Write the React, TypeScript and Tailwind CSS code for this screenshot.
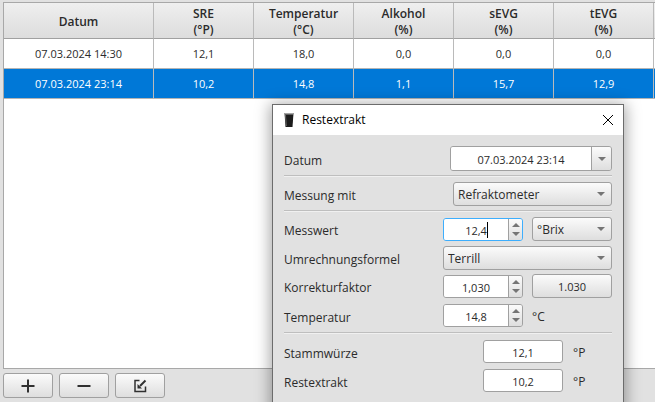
import React from 'react';
import { clsx } from 'clsx';

interface Measurement {
  date: string;
  values: string[];
}

const columns = [
  { name: 'SRE', unit: '(°P)' },
  { name: 'Temperatur', unit: '(°C)' },
  { name: 'Alkohol', unit: '(%)' },
  { name: 'sEVG', unit: '(%)' },
  { name: 'tEVG', unit: '(%)' },
];

const measurements: Measurement[] = [
  { date: '07.03.2024 14:30', values: ['12,1', '18,0', '0,0', '0,0', '0,0'] },
  { date: '07.03.2024 23:14', values: ['10,2', '14,8', '1,1', '15,7', '12,9'] },
];

const raised = 'bg-linear-to-b from-[#fbfbfb] to-[#dedede]';
const frame = 'border border-[#a0a0a0] rounded-[3px]';
const headCell = 'h-9 border-b border-b-[#a0a0a0] p-0 pt-0.5 leading-4 font-semibold';
const bodyCell = 'h-[30px] border-b border-b-[#b4b4b4] p-0 pt-0.5';
const divider = 'border-r border-r-[#bababa]';

const Caret: React.FC<{ up?: boolean }> = ({ up }) => (
  <svg width="8" height="4" viewBox="0 0 8 4" fill="#757575" aria-hidden="true">
    <path d={up ? 'M0 4 4 0 8 4z' : 'M0 0h8L4 4z'} />
  </svg>
);

const Label: React.FC<{ htmlFor: string; children: React.ReactNode }> = ({ htmlFor, children }) => (
  <label htmlFor={htmlFor} className="flex-1 self-center whitespace-nowrap pt-1">
    {children}
  </label>
);

const Separator = () => <hr className="h-0.5 border-0 border-t border-[#bebebe] bg-[#f0f0f0]" />;

interface SelectProps {
  id: string;
  value: string;
  className: string;
  label?: string;
}

const Select: React.FC<SelectProps> = ({ id, value, className, label }) => (
  <div className={clsx('relative h-6', className)}>
    <select
      id={id}
      aria-label={label}
      defaultValue={value}
      className={clsx('h-full w-full appearance-none pl-1 pr-5 pt-0.5 outline-none', raised, frame)}
    >
      <option>{value}</option>
    </select>
    <span className="pointer-events-none absolute inset-y-0 right-[7px] flex items-center">
      <Caret />
    </span>
  </div>
);

interface SpinnerProps {
  id: string;
  value: string;
  focused?: boolean;
}

const Spinner: React.FC<SpinnerProps> = ({ id, value, focused }) => (
  <div
    className={clsx(
      'relative flex h-[23px] w-20 overflow-hidden rounded-[3px] border',
      focused ? 'border-[#3daefd]' : 'border-[#a0a0a0]',
    )}
  >
    <input
      id={id}
      defaultValue={value}
      className="min-w-0 flex-1 bg-white pt-[3px] text-center text-[11px] caret-transparent outline-none"
    />
    {focused && <span className="absolute left-[43px] top-[3px] h-4 w-px bg-black" />}
    <div className={clsx('flex w-3.5 flex-col border-l border-[#a0a0a0] py-0.5', raised)}>
      <button aria-label="Erhöhen" className="flex flex-1 items-center justify-center">
        <Caret up />
      </button>
      <button aria-label="Verringern" className="flex flex-1 items-center justify-center">
        <Caret />
      </button>
    </div>
  </div>
);

const Result: React.FC<{ id: string; label: string; value: string }> = ({ id, label, value }) => (
  <div className="mt-1.5 flex h-[23px]">
    <Label htmlFor={id}>{label}</Label>
    <input
      id={id}
      readOnly
      defaultValue={value}
      className={clsx('w-20 bg-white pt-[3px] text-center text-[11px] outline-none', frame)}
    />
    <span className="w-[49px] self-center pl-2.5 pt-0.5">°P</span>
  </div>
);

const ToolButton: React.FC<{ label: string; children: React.ReactNode }> = ({ label, children }) => (
  <button
    aria-label={label}
    className={clsx('flex h-[25px] w-[50px] items-center justify-center', raised, frame)}
  >
    <svg width="16" height="16" viewBox="0 0 16 16" fill="none" stroke="#303030" aria-hidden="true">
      {children}
    </svg>
  </button>
);

const MeasurementTable = () => (
  <table className="w-full table-fixed border-separate border-spacing-0 text-center">
    <colgroup>
      <col className="w-[150px]" />
      {columns.map((c) => (
        <col key={c.name} className="w-[100px]" />
      ))}
      <col />
    </colgroup>
    <thead>
      <tr className="bg-linear-to-b from-[#efefef] to-[#dcdcdc]">
        <th className={clsx(headCell, divider)}>Datum</th>
        {columns.map((c) => (
          <th key={c.name} className={clsx(headCell, divider)}>
            {c.name}
            <br />
            {c.unit}
          </th>
        ))}
        <th className={headCell} />
      </tr>
    </thead>
    <tbody className="text-[11px]">
      {measurements.map((m, i) => (
        <tr key={m.date} className={i === 1 ? 'bg-[#0078d7] text-white' : 'bg-white'}>
          <td className={clsx(bodyCell, divider)}>{m.date}</td>
          {m.values.map((v, j) => (
            <td key={j} className={clsx(bodyCell, divider)}>
              {v}
            </td>
          ))}
          <td className={bodyCell} />
        </tr>
      ))}
    </tbody>
  </table>
);

const RestextraktDialog = () => (
  <div
    role="dialog"
    aria-label="Restextrakt"
    className="absolute left-[272px] top-[104px] h-80 w-[352px] border border-[#6c6c6c] bg-[#e1e1e1] shadow-[0_2px_14px_2px_rgba(0,0,0,0.35)]"
  >
    <div className="flex h-[30px] items-center bg-white pl-2.5 pr-[9px] text-black">
      <svg width="12" height="16" viewBox="0 0 12 16" aria-hidden="true">
        <path d="M1.500 1h9L9.500 15h-7z" fill="#1c1c1c" />
        <path d="M1.500 1h9v1.500h-9z" fill="#a5a5a5" />
        <path d="M2 3h1l.8 11h-1z" fill="#666" />
      </svg>
      <span className="ml-[7px] flex-1">Restextrakt</span>
      <button aria-label="Schließen">
        <svg width="12" height="12" viewBox="0 0 12 12" stroke="#000" aria-hidden="true">
          <path d="M1 1l10 10M11 1 1 11" />
        </svg>
      </button>
    </div>

    <form className="px-[11px] pt-[11px]" onSubmit={(e) => e.preventDefault()}>
      <div className="mb-1 flex h-[25px]">
        <Label htmlFor="datum">Datum</Label>
        <div className={clsx('flex w-[162px] overflow-hidden', frame)}>
          <input
            id="datum"
            defaultValue="07.03.2024 23:14"
            className="min-w-0 flex-1 bg-white pt-[3px] text-center text-[11px] outline-none"
          />
          <button
            aria-label="Kalender"
            className={clsx('flex w-5 items-center justify-center border-l border-[#a0a0a0]', raised)}
          >
            <Caret />
          </button>
        </div>
      </div>
      <Separator />
      <div className="mb-1 mt-[5px] flex h-6">
        <Label htmlFor="messung">Messung mit</Label>
        <Select id="messung" value="Refraktometer" className="w-[159px]" />
      </div>
      <Separator />
      <div className="mt-[5px] flex h-6 items-end">
        <Label htmlFor="messwert">Messwert</Label>
        <Spinner id="messwert" value="12,4" focused />
        <Select id="einheit" value="°Brix" label="Einheit" className="ml-[9px] w-20" />
      </div>
      <div className="mt-[5px] flex h-6">
        <Label htmlFor="formel">Umrechnungsformel</Label>
        <Select id="formel" value="Terrill" className="w-[169px]" />
      </div>
      <div className="mt-1 flex h-6 items-end">
        <Label htmlFor="faktor">Korrekturfaktor</Label>
        <Spinner id="faktor" value="1,030" />
        <button className={clsx('ml-[9px] h-6 w-20 pt-0.5 text-[11px]', raised, frame)}>1.030</button>
      </div>
      <div className="mb-[5px] mt-1.5 flex h-[23px]">
        <Label htmlFor="temperatur">Temperatur</Label>
        <Spinner id="temperatur" value="14,8" />
        <span className="w-[89px] self-center pl-[9px] pt-0.5">°C</span>
      </div>
      <Separator />
      <Result id="stammwuerze" label="Stammwürze" value="12,1" />
      <Result id="restextrakt" label="Restextrakt" value="10,2" />
    </form>
  </div>
);

export default function App() {
  return (
    <div className="relative flex h-screen flex-col overflow-hidden bg-[#e1e1e1] pl-[3px] pt-0.5 font-['Open_Sans',sans-serif] text-xs text-[#2b2b2b]">
      <div className="flex-1 border-y border-l border-[#a8a8a8] bg-white">
        <MeasurementTable />
      </div>
      <div className="flex gap-1.5 pb-1 pt-1">
        <ToolButton label="Hinzufügen">
          <path d="M8 1.500v13M1.500 8h13" strokeWidth="2" />
        </ToolButton>
        <ToolButton label="Entfernen">
          <path d="M1.500 8h13" strokeWidth="2" />
        </ToolButton>
        <ToolButton label="Bearbeiten">
          <path d="M7.500 2.500H3v11h10.500V8.500" strokeWidth="1.500" />
          <path d="M13.500 2.500 8 8" strokeWidth="2" />
          <path d="M5.500 10.500V6l4.500 4.500z" fill="#303030" stroke="none" />
        </ToolButton>
      </div>
      <RestextraktDialog />
    </div>
  );
}
